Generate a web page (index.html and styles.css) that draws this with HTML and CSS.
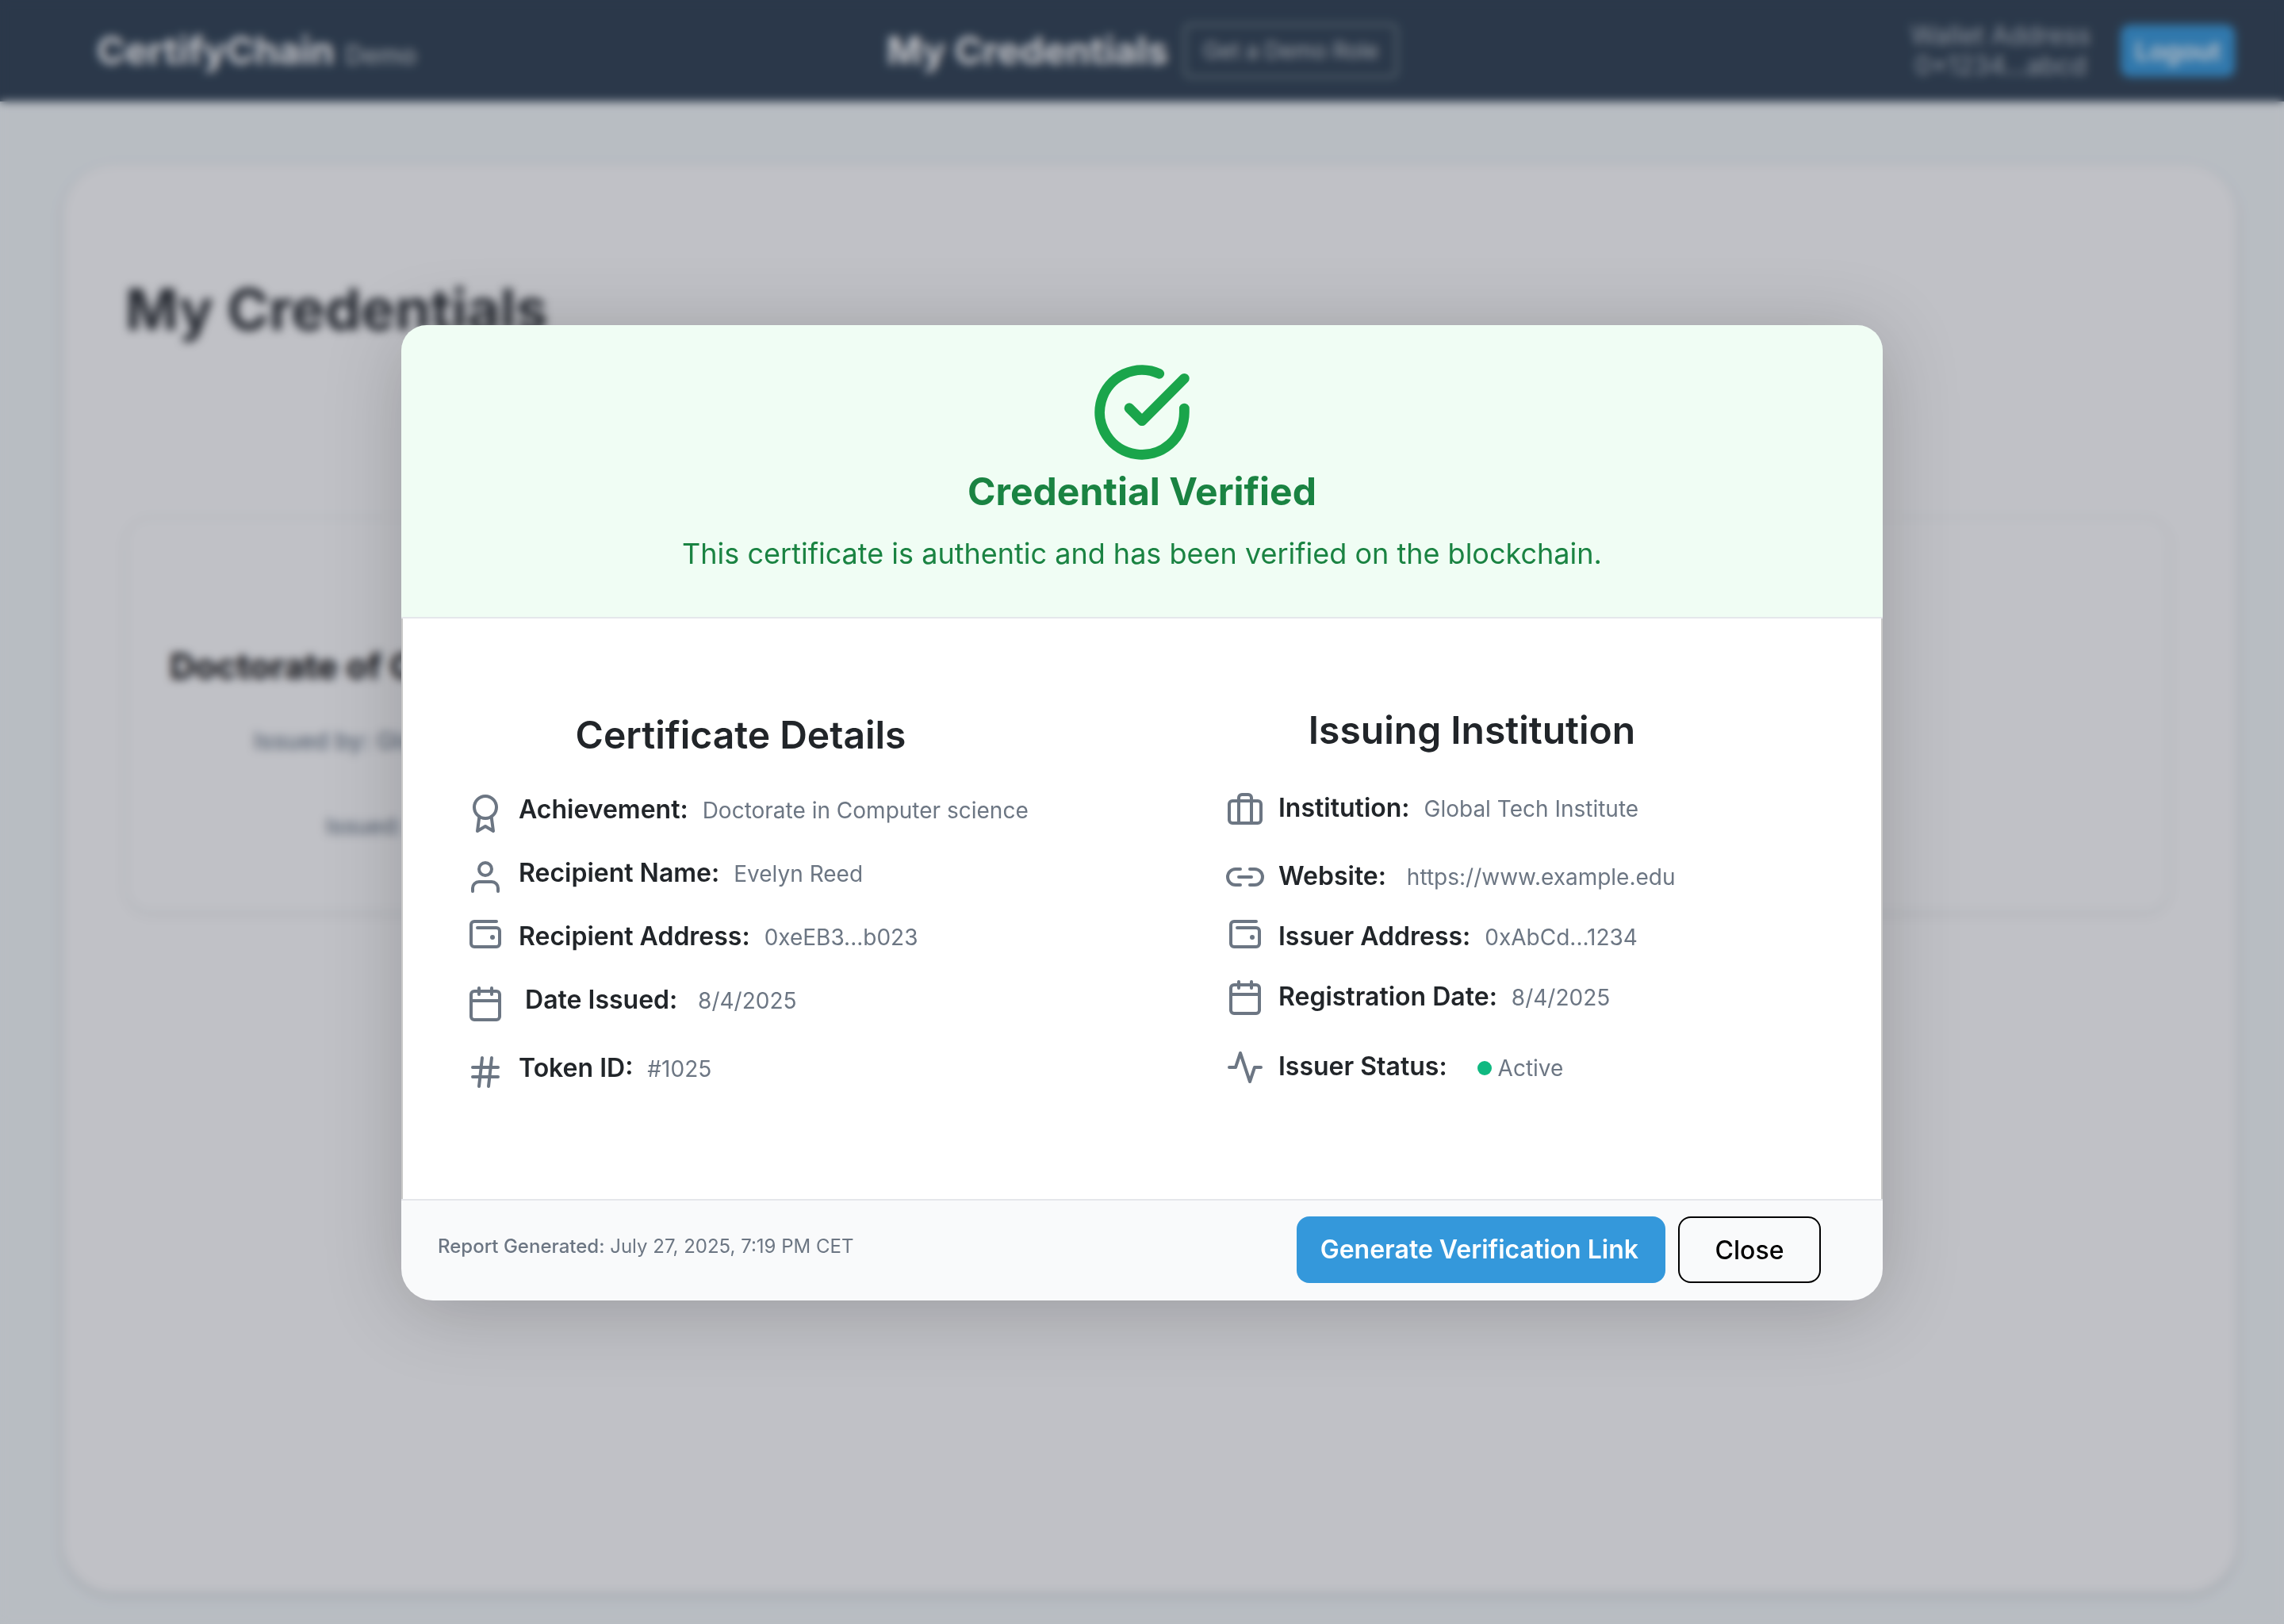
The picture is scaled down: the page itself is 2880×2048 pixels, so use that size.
FILE: index.html
```html
<!DOCTYPE html>
<html lang="en">
<head>
  <meta charset="utf-8">
  <meta name="viewport" content="width=device-width, initial-scale=1">
  <title>CertifyChain – My Credentials</title>
  <link rel="stylesheet" href="styles.css">
</head>
<body>
  <div class="page">
    <header class="topbar">
      <div class="brand">
        <span class="brand-name">CertifyChain</span>
        <span class="brand-tag">Demo</span>
      </div>
      <div class="topbar-center">
        <span class="topbar-title">My Credentials</span>
        <button type="button" class="role-button">Get a Demo Role</button>
      </div>
      <div class="account">
        <p class="wallet">Wallet Address<br>0×1234...abcd</p>
        <button type="button" class="logout-button">Logout</button>
      </div>
    </header>
    <main class="panel">
      <h1 class="panel-title">My Credentials</h1>
      <article class="credential">
        <div class="credential-text">
          <h2 class="credential-title">Doctorate of Computer Science</h2>
          <p class="credential-issuer">Issued by: Global Tech Institute</p>
          <p class="credential-date">Issued: 08/04/2025</p>
        </div>
      </article>
    </main>
  </div>

  <div class="overlay">
    <section class="modal" role="dialog" aria-modal="true" aria-labelledby="modal-title">
      <header class="modal-header">
        <svg class="verified-icon" viewBox="0 0 24 24" aria-hidden="true">
          <path d="M22 11.08V12a10 10 0 1 1-5.93-9.14"/>
          <path d="M22 4 12 14.01l-3-3"/>
        </svg>
        <h2 class="modal-title" id="modal-title">Credential Verified</h2>
        <p class="modal-subtitle">This certificate is authentic and has been verified on the blockchain.</p>
      </header>

      <div class="modal-body">
        <section class="details details-certificate">
          <h3 class="details-title">Certificate Details</h3>
          <dl class="facts">
            <div class="fact">
              <svg class="icon" viewBox="0 0 24 24" aria-hidden="true"><circle cx="12" cy="8" r="7"/><path d="M8.21 13.89 7 23l5-3 5 3-1.21-9.12"/></svg>
              <dt>Achievement:</dt>
              <dd>Doctorate in Computer science</dd>
            </div>
            <div class="fact">
              <svg class="icon" viewBox="0 0 24 24" aria-hidden="true"><path d="M20 21v-2a4 4 0 0 0-4-4H8a4 4 0 0 0-4 4v2"/><circle cx="12" cy="7" r="4"/></svg>
              <dt>Recipient Name:</dt>
              <dd>Evelyn Reed</dd>
            </div>
            <div class="fact">
              <svg class="icon icon-wallet" viewBox="0 0 24 24" aria-hidden="true"><path d="M19 4H5a2 2 0 0 0-2 2v12a2 2 0 0 0 2 2h14a2 2 0 0 0 2-2v-8a2 2 0 0 0-2-2H7"/><circle class="dot" cx="16.5" cy="14" r="1.5"/></svg>
              <dt>Recipient Address:</dt>
              <dd>0xeEB3...b023</dd>
            </div>
            <div class="fact">
              <svg class="icon" viewBox="0 0 24 24" aria-hidden="true"><rect x="3" y="4" width="18" height="18" rx="2"/><path d="M16 2v4M8 2v4M3 10h18"/></svg>
              <dt>&nbsp;Date Issued:</dt>
              <dd>&nbsp;8/4/2025</dd>
            </div>
            <div class="fact">
              <svg class="icon" viewBox="0 0 24 24" aria-hidden="true"><path d="M4 9h16M4 15h16M10 3 8 21M16 3l-2 18"/></svg>
              <dt>Token ID:</dt>
              <dd>#1025</dd>
            </div>
          </dl>
        </section>

        <section class="details details-institution">
          <h3 class="details-title">Issuing Institution</h3>
          <dl class="facts">
            <div class="fact">
              <svg class="icon" viewBox="0 0 24 24" aria-hidden="true"><rect x="2" y="7" width="20" height="14" rx="2"/><path d="M16 21V5a2 2 0 0 0-2-2h-4a2 2 0 0 0-2 2v16"/></svg>
              <dt>Institution:</dt>
              <dd>Global Tech Institute</dd>
            </div>
            <div class="fact">
              <svg class="icon" viewBox="0 0 24 24" aria-hidden="true"><path d="M15 7h3a5 5 0 0 1 0 10h-3M9 17H6A5 5 0 0 1 6 7h3M8 12h8"/></svg>
              <dt>Website:</dt>
              <dd>&nbsp;https://www.example.edu</dd>
            </div>
            <div class="fact">
              <svg class="icon icon-wallet" viewBox="0 0 24 24" aria-hidden="true"><path d="M19 4H5a2 2 0 0 0-2 2v12a2 2 0 0 0 2 2h14a2 2 0 0 0 2-2v-8a2 2 0 0 0-2-2H7"/><circle class="dot" cx="16.5" cy="14" r="1.5"/></svg>
              <dt>Issuer Address:</dt>
              <dd>0xAbCd...1234</dd>
            </div>
            <div class="fact">
              <svg class="icon" viewBox="0 0 24 24" aria-hidden="true"><rect x="3" y="4" width="18" height="18" rx="2"/><path d="M16 2v4M8 2v4M3 10h18"/></svg>
              <dt>Registration Date:</dt>
              <dd>8/4/2025</dd>
            </div>
            <div class="fact">
              <svg class="icon" viewBox="0 0 24 24" aria-hidden="true"><path d="M22 12h-4l-3 9L9 3l-3 9H2"/></svg>
              <dt>Issuer Status:</dt>
              <dd class="status"><span class="status-dot"></span>Active</dd>
            </div>
          </dl>
        </section>
      </div>

      <footer class="modal-footer">
        <p class="report"><strong>Report Generated:</strong> July 27, 2025, 7:19 PM CET</p>
        <div class="actions">
          <button type="button" class="button button-primary">Generate Verification Link</button>
          <button type="button" class="button button-outline">Close</button>
        </div>
      </footer>
    </section>
  </div>
</body>
</html>
```
FILE: styles.css
```css
* {
  box-sizing: border-box;
}

body,
h1,
h2,
h3,
p,
dl,
dd {
  margin: 0;
}

body {
  font-family: Inter, "Liberation Sans", sans-serif;
  color: #212529;
  background: #f4f9fa;
}

button {
  font-family: inherit;
  cursor: pointer;
}

/* Page behind the dialog */

.page {
  display: flex;
  flex-direction: column;
  min-height: 100vh;
}

.topbar {
  display: grid;
  grid-template-columns: 1fr auto 1fr;
  align-items: center;
  height: 128px;
  padding: 0 62px;
  color: #fff;
  background: #2c3e50;
}

.brand {
  display: flex;
  align-items: baseline;
  gap: 14px;
  padding-left: 60px;
}

.brand-name,
.topbar-title {
  font-size: 48px;
  font-weight: 700;
  line-height: 56px;
}

.brand-tag {
  font-size: 32px;
  font-weight: 500;
  color: #bdc3c7;
}

.topbar-center {
  display: flex;
  align-items: center;
  gap: 20px;
}

.role-button {
  height: 68px;
  padding: 0 22px;
  border: 2px solid #95a5a6;
  border-radius: 8px;
  font-size: 28px;
  color: #cdd2d5;
  background: transparent;
}

.account {
  display: flex;
  align-items: center;
  justify-content: flex-end;
  gap: 38px;
}

.wallet {
  font-size: 32px;
  line-height: 38px;
  text-align: center;
  color: #b4bdc5;
}

.logout-button {
  height: 66px;
  padding: 0 18px;
  border: 0;
  border-radius: 12px;
  font-size: 32px;
  font-weight: 600;
  color: #fff;
  background: #3498db;
}

.panel {
  flex: 1;
  margin: 80px 60px 40px 80px;
  padding: 138px 84px 138px 78px;
  border-radius: 64px;
  background: #fff;
  box-shadow: 0 4px 14px rgba(0, 0, 0, 0.12);
}

.panel-title {
  font-size: 72px;
  font-weight: 700;
  line-height: 88px;
}

.credential {
  margin-top: 218px;
  padding: 158px 54px 88px;
  border: 2px solid #f1f5f5;
  border-radius: 32px;
  box-shadow: 0 4px 12px rgba(0, 0, 0, 0.06);
}

.credential-text {
  max-width: 660px;
  text-align: center;
  color: #6c7a89;
}

.credential-title {
  font-size: 44px;
  font-weight: 700;
  line-height: 56px;
  white-space: nowrap;
  color: #000;
}

.credential-issuer {
  margin-top: 46px;
  font-size: 30px;
  font-weight: 500;
  line-height: 40px;
}

.credential-date {
  margin-top: 70px;
  font-size: 28px;
  font-weight: 500;
  line-height: 36px;
}

/* Dialog */

.overlay {
  position: fixed;
  inset: 0;
  display: flex;
  align-items: center;
  justify-content: center;
  padding-top: 2px;
  background: rgba(40, 44, 60, 0.294);
  backdrop-filter: blur(6px);
}

.modal {
  display: flex;
  flex-direction: column;
  width: 100%;
  max-width: 1868px;
  border-radius: 32px 32px 40px 40px;
  overflow: hidden;
  box-shadow: 0 12px 100px rgba(0, 0, 0, 0.2);
}

.modal-header {
  display: flex;
  flex-direction: column;
  align-items: center;
  padding: 46px 40px 58px;
  border-bottom: 2px solid #e5e7eb;
  text-align: center;
  color: #1a8342;
  background: #f0fdf4;
}

.verified-icon {
  width: 128px;
  height: 128px;
  fill: none;
  stroke: #1aa54b;
  stroke-width: 2.4;
  stroke-linecap: round;
  stroke-linejoin: round;
}

.modal-title {
  margin-top: 8px;
  font-size: 48px;
  font-weight: 700;
  line-height: 56px;
}

.modal-subtitle {
  margin-top: 28px;
  font-size: 36px;
  line-height: 44px;
}

.modal-body {
  display: grid;
  grid-template-columns: minmax(0, 692fr) minmax(0, 620fr);
  gap: 266px;
  padding: 112px 206px 136px 80px;
  border: solid #c8c8c8;
  border-width: 0 2px;
  background: #fff;
}

.details-title {
  font-size: 48px;
  font-weight: 600;
  line-height: 58px;
  text-align: center;
}

.facts {
  display: grid;
  align-items: start;
}

.details-certificate {
  padding-top: 6px;
}

.details-certificate .facts {
  grid-template-rows: 80px 80px 80px 86px 54px;
  margin-top: 40px;
}

.details-institution .facts {
  grid-template-rows: 86px 76px 76px 88px 54px;
  margin-top: 44px;
}

.fact {
  display: flex;
  align-items: baseline;
  line-height: 50px;
  white-space: nowrap;
}

.icon {
  flex: none;
  align-self: flex-start;
  width: 48px;
  height: 48px;
  fill: none;
  stroke: #6c7683;
  stroke-width: 2;
  stroke-linecap: round;
  stroke-linejoin: round;
}

.details-certificate .icon {
  margin: 6px 18px 0 0;
}

.details-institution .icon {
  margin: 2px 18px 0 0;
}

.facts .icon-wallet {
  margin-top: -2px;
}

.icon .dot {
  fill: #6c7683;
  stroke: none;
}

.fact dt {
  font-size: 32px;
  font-weight: 600;
}

.fact dd {
  margin-left: 18px;
  font-size: 28px;
  color: #6c7683;
}

.fact .status {
  display: flex;
  align-items: center;
  gap: 8px;
  margin-left: 38px;
}

.status-dot {
  width: 18px;
  height: 18px;
  border-radius: 50%;
  background: #10b981;
}

.modal-footer {
  display: flex;
  align-items: center;
  justify-content: space-between;
  padding: 20px 78px 22px 46px;
  border-top: 2px solid #e5e7eb;
  background: #f9fafb;
}

.report {
  padding-bottom: 8px;
  font-size: 24px;
  line-height: 32px;
  color: #6c7683;
}

.report strong {
  font-weight: 500;
}

.actions {
  display: flex;
  gap: 16px;
}

.button {
  height: 84px;
  border-radius: 16px;
  font-size: 32px;
}

.button-primary {
  padding: 0 34px 2px 30px;
  border: 0;
  font-weight: 600;
  color: #fff;
  background: #3498db;
}

.button-outline {
  min-width: 180px;
  padding: 0 32px;
  border: 2px solid #000;
  font-weight: 500;
  color: #000;
  background: transparent;
}
```
